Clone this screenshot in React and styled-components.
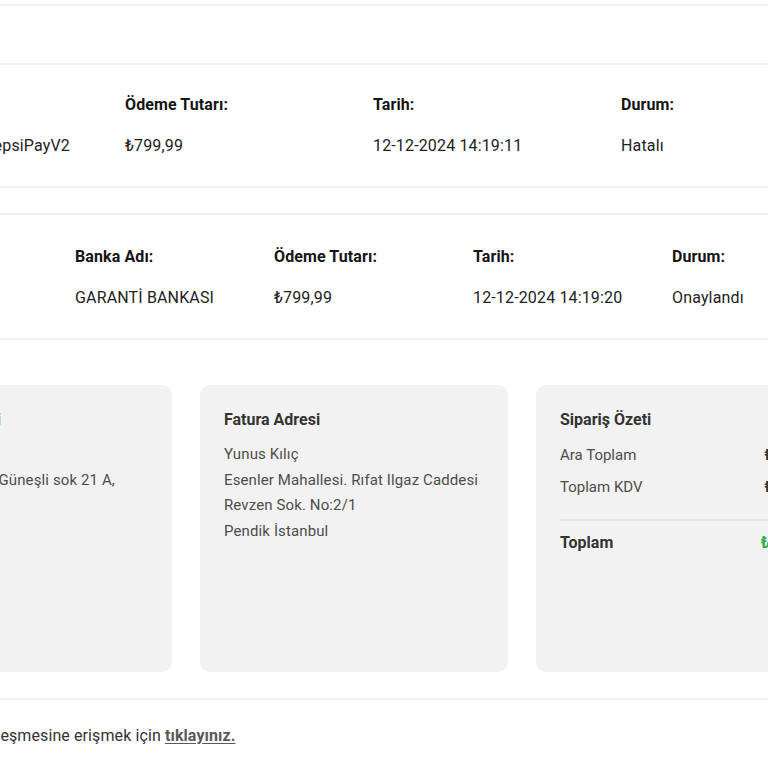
import styled, { createGlobalStyle } from 'styled-components';

const GlobalStyle = createGlobalStyle`
  html, body {
    margin: 0;
    padding: 0;
    background: #ffffff;
    overflow: hidden;
  }
  body {
    font-family: Roboto, "Noto Sans", "Liberation Sans", sans-serif;
    color: #222222;
  }
`;

const Page = styled.div`
  width: 1120px;
  margin-left: -160px;
  padding-top: 4px;
`;

const Header = styled.div`
  height: 57px;
  border-top: 2px solid #f1f1f1;
  border-bottom: 2px solid #f1f1f1;
`;

const InfoRow = styled.div`
  display: grid;
  grid-template-columns: repeat(${p => p.$cols}, ${p => p.$colWidth}px);
  padding: ${p => p.$top}px 0 30px ${p => p.$left}px;
  margin-top: ${p => p.$gap}px;
  border-top: ${p => (p.$gap ? '2px solid #f1f1f1' : 'none')};
  border-bottom: 2px solid #f1f1f1;
`;

const Cell = styled.div`
  display: flex;
  flex-direction: column;
  gap: 21px;
  white-space: nowrap;
`;

const Label = styled.div`
  font-size: 16px;
  line-height: 20px;
  font-weight: 700;
  letter-spacing: 0.1px;
  color: #151515;
`;

const Value = styled.div`
  font-size: 16px;
  line-height: 20px;
  letter-spacing: 0.15px;
  color: #222222;
`;

const Cards = styled.div`
  display: grid;
  grid-template-columns: repeat(3, 308px);
  gap: 28px;
  margin-top: 45px;
  padding-left: 24px;
`;

const Card = styled.div`
  height: 287px;
  box-sizing: border-box;
  padding: 23px 24px;
  background: #f2f2f2;
  border-radius: 10px;
`;

const CardTitle = styled.div`
  font-size: 16px;
  line-height: 24px;
  font-weight: 700;
  color: #333333;
  margin-bottom: 10px;
`;

const CardLine = styled.div`
  font-size: 15px;
  line-height: 25.5px;
  letter-spacing: 0.12px;
  color: #4d4d4d;
  white-space: nowrap;
`;

const SummaryRow = styled.div`
  display: flex;
  justify-content: space-between;
  font-size: ${p => (p.$total ? 16 : 15)}px;
  line-height: ${p => (p.$total ? 24 : 26)}px;
  margin-bottom: 6px;
  color: ${p => (p.$total ? '#333333' : '#4d4d4d')};
  font-weight: ${p => (p.$total ? 700 : 400)};
`;

const Amount = styled.span`
  font-weight: 700;
  color: ${p => (p.$green ? '#2bb04f' : '#333333')};
`;

const Divider = styled.div`
  height: 2px;
  background: #e2e2e2;
  margin: 19px 0 10px;
`;

const Footer = styled.div`
  margin-top: 26px;
  border-top: 2px solid #f1f1f1;
  padding: 26px 0 0 26px;
  font-size: 16px;
  line-height: 20px;
  letter-spacing: 0.1px;
  color: #333333;
  white-space: nowrap;
`;

const FooterLink = styled.a`
  font-weight: 700;
  color: #5a5a5a;
  text-decoration: underline;
  text-underline-offset: 2px;
  cursor: pointer;
`;

const paymentRow = [
  { label: 'Ödeme Yöntemi:', value: 'Kredi Kartı ile: HepsiPayV2' },
  { label: 'Ödeme Tutarı:', value: '₺799,99' },
  { label: 'Tarih:', value: '12-12-2024 14:19:11' },
  { label: 'Durum:', value: 'Hatalı' },
];

const bankRow = [
  { label: 'Kart No:', value: '4543 **** 1234' },
  { label: 'Banka Adı:', value: 'GARANTİ BANKASI' },
  { label: 'Ödeme Tutarı:', value: '₺799,99' },
  { label: 'Tarih:', value: '12-12-2024 14:19:20' },
  { label: 'Durum:', value: 'Onaylandı' },
];

const Info = ({ items, cols, colWidth, left, top, gap }) => (
  <InfoRow $cols={cols} $colWidth={colWidth} $left={left} $top={top} $gap={gap}>
    {items.map(item => (
      <Cell key={item.label}>
        <Label>{item.label}</Label>
        <Value>{item.value}</Value>
      </Cell>
    ))}
  </InfoRow>
);

const App = () => {
  return (
    <>
      <GlobalStyle />
      <Page>
        <Header />
        <Info items={paymentRow} cols={4} colWidth={248} left={37} top={30} gap={0} />
        <Info items={bankRow} cols={5} colWidth={199} left={36} top={32} gap={25} />

        <Cards>
          <Card>
            <CardTitle>Teslimat Adresi</CardTitle>
            <CardLine>Yunus Kılıç</CardLine>
            <CardLine>Evren Mahallesi Güneşli sok 21 A,</CardLine>
            <CardLine>Bahçelievler</CardLine>
          </Card>
          <Card>
            <CardTitle>Fatura Adresi</CardTitle>
            <CardLine>Yunus Kılıç</CardLine>
            <CardLine>Esenler Mahallesi. Rıfat Ilgaz Caddesi</CardLine>
            <CardLine>Revzen Sok. No:2/1</CardLine>
            <CardLine>Pendik İstanbul</CardLine>
          </Card>
          <Card>
            <CardTitle>Sipariş Özeti</CardTitle>
            <SummaryRow>
              <span>Ara Toplam</span>
              <Amount>₺666,66</Amount>
            </SummaryRow>
            <SummaryRow>
              <span>Toplam KDV</span>
              <Amount>₺133,33</Amount>
            </SummaryRow>
            <Divider />
            <SummaryRow $total>
              <span>Toplam</span>
              <Amount $green>₺799,99</Amount>
            </SummaryRow>
          </Card>
        </Cards>

        <Footer>
          Mesafeli satış sözleşmesine erişmek için <FooterLink>tıklayınız.</FooterLink>
        </Footer>
      </Page>
    </>
  );
};

export default App;
